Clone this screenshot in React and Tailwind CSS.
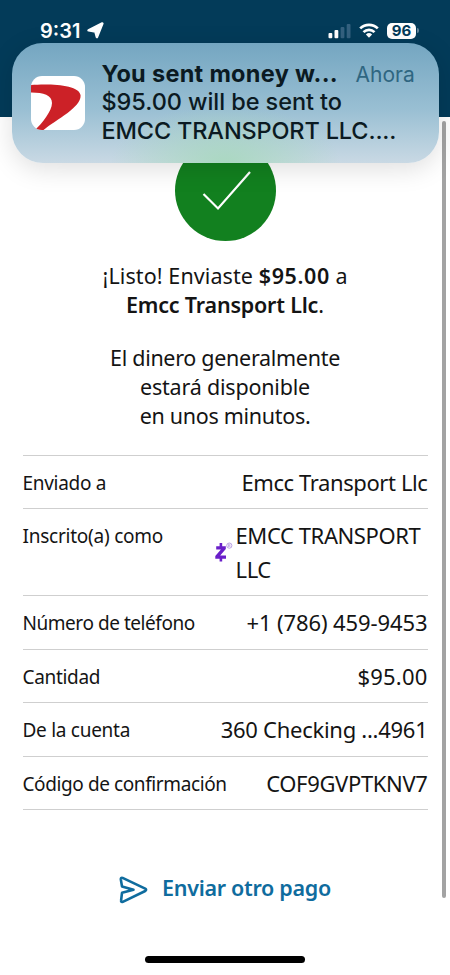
import React from 'react';

const DETAILS = [
  {
    label: 'Enviado a',
    labelClass: 'tracking-[-0.3px]',
    value: 'Emcc Transport Llc',
    valueClass: 'tracking-[-0.4px]',
  },
  {
    label: 'Inscrito(a) como',
    labelClass: 'tracking-[-0.24px]',
    value: 'EMCC TRANSPORT LLC',
    valueClass: 'w-[192px] tracking-[-0.4px]',
    zelle: true,
  },
  {
    label: 'Número de teléfono',
    labelClass: 'tracking-[-0.45px]',
    value: '+1 (786) 459-9453',
    valueClass: 'tracking-[-0.1px]',
  },
  {
    label: 'Cantidad',
    labelClass: 'tracking-[-0.33px]',
    value: '$95.00',
    valueClass: 'tracking-[0.2px]',
  },
  {
    label: 'De la cuenta',
    labelClass: 'tracking-[-0.28px]',
    value: '360 Checking ...4961',
    valueClass: 'tracking-[-0.27px]',
  },
  {
    label: 'Código de confirmación',
    labelClass: 'tracking-[-0.4px]',
    value: 'COF9GVPTKNV7',
    valueClass: 'tracking-[-0.35px]',
  },
];

const ZelleMark = () => (
  <svg width="18" height="20" viewBox="0 0 18 20" fill="none" className="mt-[23px] shrink-0">
    <path
      d="M1.2 4.2h9.6v2.7L5.2 13.6h5.8v3.1H.3v-2.6L5.9 7.4H1.2z"
      fill="#6a1fc9"
    />
    <path d="M5.9 1v4M5.9 15.5v4" stroke="#6a1fc9" strokeWidth="2.6" />
    <circle cx="14.3" cy="3.6" r="2.6" stroke="#a98bdc" strokeWidth="0.8" />
    <path d="M13.4 5V2.3h1.1a.75.75 0 0 1 0 1.5h-1.1m1.1 0 .7 1.2" stroke="#a98bdc" strokeWidth="0.6" />
  </svg>
);

const StatusBar = () => (
  <div className="flex h-[61px] items-center justify-between pl-[40px] pr-[31px] font-['Inter',sans-serif] text-white">
    <div className="flex items-center">
      <span className="text-[20px] leading-[20px] font-semibold">9:31</span>
      <svg width="17" height="17" viewBox="0 0 17 17" className="ml-[7px]">
        <path
          d="M15.3 1.5 9.9 15 8.4 9.4 1.6 8.3z"
          fill="white"
          stroke="white"
          strokeWidth="2.6"
          strokeLinejoin="round"
        />
      </svg>
    </div>
    <div className="flex items-center">
      <svg width="24" height="16" viewBox="0 0 24 16">
        <rect x="0.5" y="10" width="3.8" height="5.2" rx="1" fill="white" />
        <rect x="6.5" y="7" width="3.8" height="8.2" rx="1" fill="white" />
        <rect x="12.6" y="4" width="3.8" height="11.2" rx="1" fill="#34617f" />
        <rect x="18.7" y="1" width="3.8" height="14.2" rx="1" fill="#34617f" />
      </svg>
      <svg width="20" height="15" viewBox="0 0 20 15" className="ml-[7px]" fill="none" stroke="white">
        <path d="M1.2 5.4a12.6 12.6 0 0 1 17.6 0" strokeWidth="2.7" />
        <path d="M4.5 9.1a7.9 7.9 0 0 1 11 0" strokeWidth="2.7" />
        <path d="M6.9 11.5a4.5 4.5 0 0 1 6.2 0L10 14.7z" fill="white" stroke="none" />
      </svg>
      <span className="ml-[8px] flex h-[16px] w-[29px] items-center justify-center rounded-[5px] bg-white text-[15px] leading-[16px] font-bold text-[#033b59]">
        96
      </span>
      <span className="ml-[1px] h-[5px] w-[2px] rounded-r bg-[#5f8299]" />
    </div>
  </div>
);

const Notification = () => (
  <div className="absolute top-[43px] left-[11.5px] flex h-[119.5px] w-[427px] overflow-hidden rounded-[31px] bg-linear-to-b from-[#74a6c1] via-[#99bfd3] via-55% to-[#c9d9e4] pt-[17px] pl-[19px] font-['Inter',sans-serif] text-[#0b1a22] shadow-[0_6px_26px_rgba(0,0,0,0.13)]">
    <div className="absolute inset-0 bg-[radial-gradient(ellipse_115px_58px_at_50%_100%,rgba(165,216,187,0.85),rgba(165,216,187,0))]" />
    <svg width="54" height="54" viewBox="0 0 54 54" className="relative mt-[16px] shrink-0">
      <defs>
        <clipPath id="app-icon">
          <rect width="54" height="54" rx="11" />
        </clipPath>
      </defs>
      <g clipPath="url(#app-icon)">
        <rect width="54" height="54" fill="white" />
        <path
          d="M0 9C18 7.5 49 8.5 49.6 19.5C50 31.5 26 43 12.5 54H4C11 47.5 21 35 21 27C21 19 12 16.5 0 16.6Z"
          fill="#cc2127"
        />
      </g>
    </svg>
    <div className="relative ml-[17px] w-[320px] text-[23.5px] leading-[28.3px] whitespace-nowrap">
      <div className="flex">
        <span className="w-[254px] font-bold tracking-[0.3px]">You sent money w...</span>
        <span className="mt-[1px] h-[27.3px] text-[21px] text-[#2f6681]">Ahora</span>
      </div>
      <p className="font-medium tracking-[-0.07px]">$95.00 will be sent to</p>
      <p className="font-medium tracking-[-0.15px]">EMCC TRANSPORT LLC....</p>
    </div>
  </div>
);

const App = () => {
  return (
    <div className="relative flex h-[975px] w-[450px] flex-col overflow-hidden bg-white font-['Noto_Sans',sans-serif] text-[#141414]">
      <header className="h-[117px] shrink-0 bg-[#033b59]">
        <StatusBar />
      </header>

      <main className="flex grow justify-between pl-[22.5px]">
        <div className="flex w-[405px] flex-col">
          <div className="mt-[22.5px] flex h-[101px] w-[101px] items-center justify-center self-center rounded-full bg-[#12801f]">
            <svg width="52" height="42" viewBox="0 0 52 42" fill="none" className="ml-[2px]">
              <path d="M3.5 25 18 39.5 50 3" stroke="white" strokeWidth="2.2" />
            </svg>
          </div>

          <div className="mt-[20.5px] text-center text-[21.5px] leading-[29.2px]">
            <p>
              <span className="tracking-[0.1px]">¡Listo! Enviaste </span>
              <span className="font-semibold tracking-[0.6px]">$95.00</span> a
            </p>
            <p>
              <span className="font-semibold tracking-[-0.2px]">Emcc Transport Llc</span>.
            </p>
            <p className="mt-[23.3px] tracking-[-0.3px]">El dinero generalmente</p>
            <p className="tracking-[-0.2px]">estará disponible</p>
            <p className="tracking-[-0.3px]">en unos minutos.</p>
          </div>

          <div className="mt-[24.5px] border-t border-[#cfcfcf]">
            {DETAILS.map((item) => (
              <div
                key={item.label}
                className="flex justify-between border-b border-[#cfcfcf] pt-[10px] pb-[9px] leading-[33.5px] whitespace-nowrap"
              >
                <span className={`pt-[1px] h-[33.5px] text-[19px] ${item.labelClass}`}>{item.label}</span>
                <div className="flex">
                  {item.zelle && (
                    <div className="mr-[3px] flex h-0">
                      <ZelleMark />
                    </div>
                  )}
                  <span className={`text-[22px] whitespace-normal ${item.valueClass}`}>
                    {item.value}
                  </span>
                </div>
              </div>
            ))}
          </div>

          <button
            type="button"
            className="mt-[62px] flex items-center gap-[14px] self-center text-[21.5px] leading-[30px] font-semibold tracking-[-0.3px] text-[#0f6c9e]"
          >
            <svg width="29" height="28" viewBox="0 0 29 28" fill="none" className="mt-[4px]">
              <path
                d="M3.6 1.9 26.2 12.6Q28 13.8 26.2 15L3.8 25.8Q1.8 26.5 2.1 24.4L3 16.8 14.5 13.8 3 10.4 1.8 3.4Q1.7 1.2 3.6 1.9Z"
                stroke="#0f6c9e"
                strokeWidth="2.6"
                strokeLinejoin="round"
              />
            </svg>
            Enviar otro pago
          </button>
        </div>
        <div className="mt-[4px] mr-[4px] h-[777px] w-[4.5px] rounded-full bg-[#a3a3a3]" />
      </main>

      <div className="mb-[12px] h-[7px] w-[160px] shrink-0 self-center rounded-full bg-black" />
      <Notification />
    </div>
  );
};

export default App;
